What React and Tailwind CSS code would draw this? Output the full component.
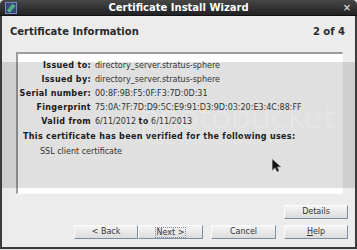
import React from "react";

function Btn({ children, className = "" }) {
  return (
    <div
      className={
        "h-[14px] w-[64px] flex items-center justify-center text-[8px] leading-none text-[#333] bg-linear-to-b from-[#f5f5f5] to-[#dcdcdc] border-t border-l border-t-[#fcfcfc] border-l-[#fcfcfc] border-r border-b border-r-[#7d8da2] border-b-[#7d8da2] " +
        className
      }
    >
      {children}
    </div>
  );
}

function Row({ label, children }) {
  return (
    <div className="grid grid-cols-[73px_1fr] gap-x-[4px] h-[14px] items-center">
      <div className="text-right font-bold text-[#222] tracking-[0.33px] whitespace-nowrap">{label}</div>
      <div className="text-[#3a3a3a] whitespace-nowrap">{children}</div>
    </div>
  );
}

export default function App() {
  return (
    <div className="w-[357px] h-[250px] relative overflow-hidden bg-[#dcdcdc] font-['DejaVu_Sans',sans-serif] text-[8px] leading-[14px]">
      <div className="h-[249px] flex flex-col bg-[#ececec] border-x-2 border-b-2 border-[#3b3b3b] rounded-t-[5px]">
        {/* Title bar */}
        <div className="h-[16px] -mx-[2px] grid grid-cols-[20px_1fr_20px] items-center bg-linear-to-b from-[#474747] to-[#222] rounded-t-[5px] border-b border-[#111]">
          <div className="pl-[5px] flex items-center">
            <svg width="12" height="12" viewBox="0 0 12 12">
              <rect x="0.5" y="0.5" width="11" height="11" fill="#34457a" stroke="#7c88c4" />
              <path d="M2 8.5 L7 2 L10.5 4 L5 10.5 Z" fill="#66c396" />
              <path d="M3.5 8 L7.3 3.2 M5 9 L8.8 4.2" stroke="#2d7a5a" strokeWidth="0.8" />
            </svg>
          </div>
          <div className="text-center text-white font-bold text-[10px] leading-[16px]">
            Certificate Install Wizard
          </div>
          <div className="flex justify-center text-[#cfcfcf] font-bold text-[10px] leading-[16px]">×</div>
        </div>

        {/* Header */}
        <div className="flex justify-between items-center pl-[8px] pr-[10px] pt-[10px] h-[22px]">
          <div className="font-bold text-[10px] leading-[12px] text-[#2a2a2a]">Certificate Information</div>
          <div className="font-bold text-[10px] leading-[12px] text-[#2a2a2a]">2 of 4</div>
        </div>

        {/* Panel */}
        <div className="mt-[14px] ml-[14px] mr-[12px] h-[142px] bg-white border-t-2 border-l-2 border-t-[#9c9c9c] border-l-[#9c9c9c] border-r border-b border-r-[#fafafa] border-b-[#fafafa] pt-[5px]">
          <Row label="Issued to:">directory_server.stratus-sphere</Row>
          <Row label="Issued by:">directory_server.stratus-sphere</Row>
          <Row label="Serial number:">00:8F:9B:F5:0F:F3:7D:0D:31</Row>
          <Row label="Fingerprint">75:0A:7F:7D:D9:5C:E9:91:D3:9D:03:20:E3:4C:88:FF</Row>
          <Row label="Valid from">
            6/11/2012 <span className="font-bold text-[#222] tracking-[0.33px]">to</span> 6/11/2013
          </Row>
          <div className="mt-[1px] h-[14px] pl-[5px] font-bold text-[#222] tracking-[0.33px] whitespace-nowrap">
            This certificate has been verified for the following uses:
          </div>
          <div className="mt-[1px] h-[14px] pl-[22px] text-[#3a3a3a]">SSL client certificate</div>
        </div>

        {/* Buttons */}
        <div className="mt-[11px] flex justify-end pr-[7px]">
          <Btn>Details</Btn>
        </div>
        <div className="mt-[6px] flex justify-end pr-[7px] gap-[8px]">
          <div className="flex">
            <Btn className="w-[63px]">&lt; Back</Btn>
            <Btn className="w-[65px]">
              <span className="border border-dotted border-[#8090a8] px-[1px] leading-[9px]">Next &gt;</span>
            </Btn>
          </div>
          <Btn className="w-[65px]">Cancel</Btn>
          <Btn>
            <span>
              <span className="underline">H</span>elp
            </span>
          </Btn>
        </div>
      </div>

      {/* Watermark band */}
      <div className="absolute top-[62px] left-[2px] right-[2px] h-[126px] bg-black/[0.12] pointer-events-none">
        <div className="absolute left-[138px] top-[36px] text-[34px] leading-[34px] font-['Lato',sans-serif] font-light text-white/25 tracking-[1px] whitespace-nowrap">
          photobucket
        </div>
        <div className="absolute left-[140px] top-[69px] text-[15px] leading-[15px] font-['Lato',sans-serif] font-light text-white/30 whitespace-nowrap">
          host. store. share.
        </div>
      </div>

      {/* Mouse cursor */}
      <svg className="absolute left-[272px] top-[159px]" width="10" height="14" viewBox="0 0 10 14">
        <path d="M0.5 0.5 L0.5 11 L3.2 8.4 L5 12.5 L6.8 11.7 L5 7.7 L8.5 7.7 Z" fill="#111" stroke="#555" strokeWidth="0.6" />
      </svg>
    </div>
  );
}
